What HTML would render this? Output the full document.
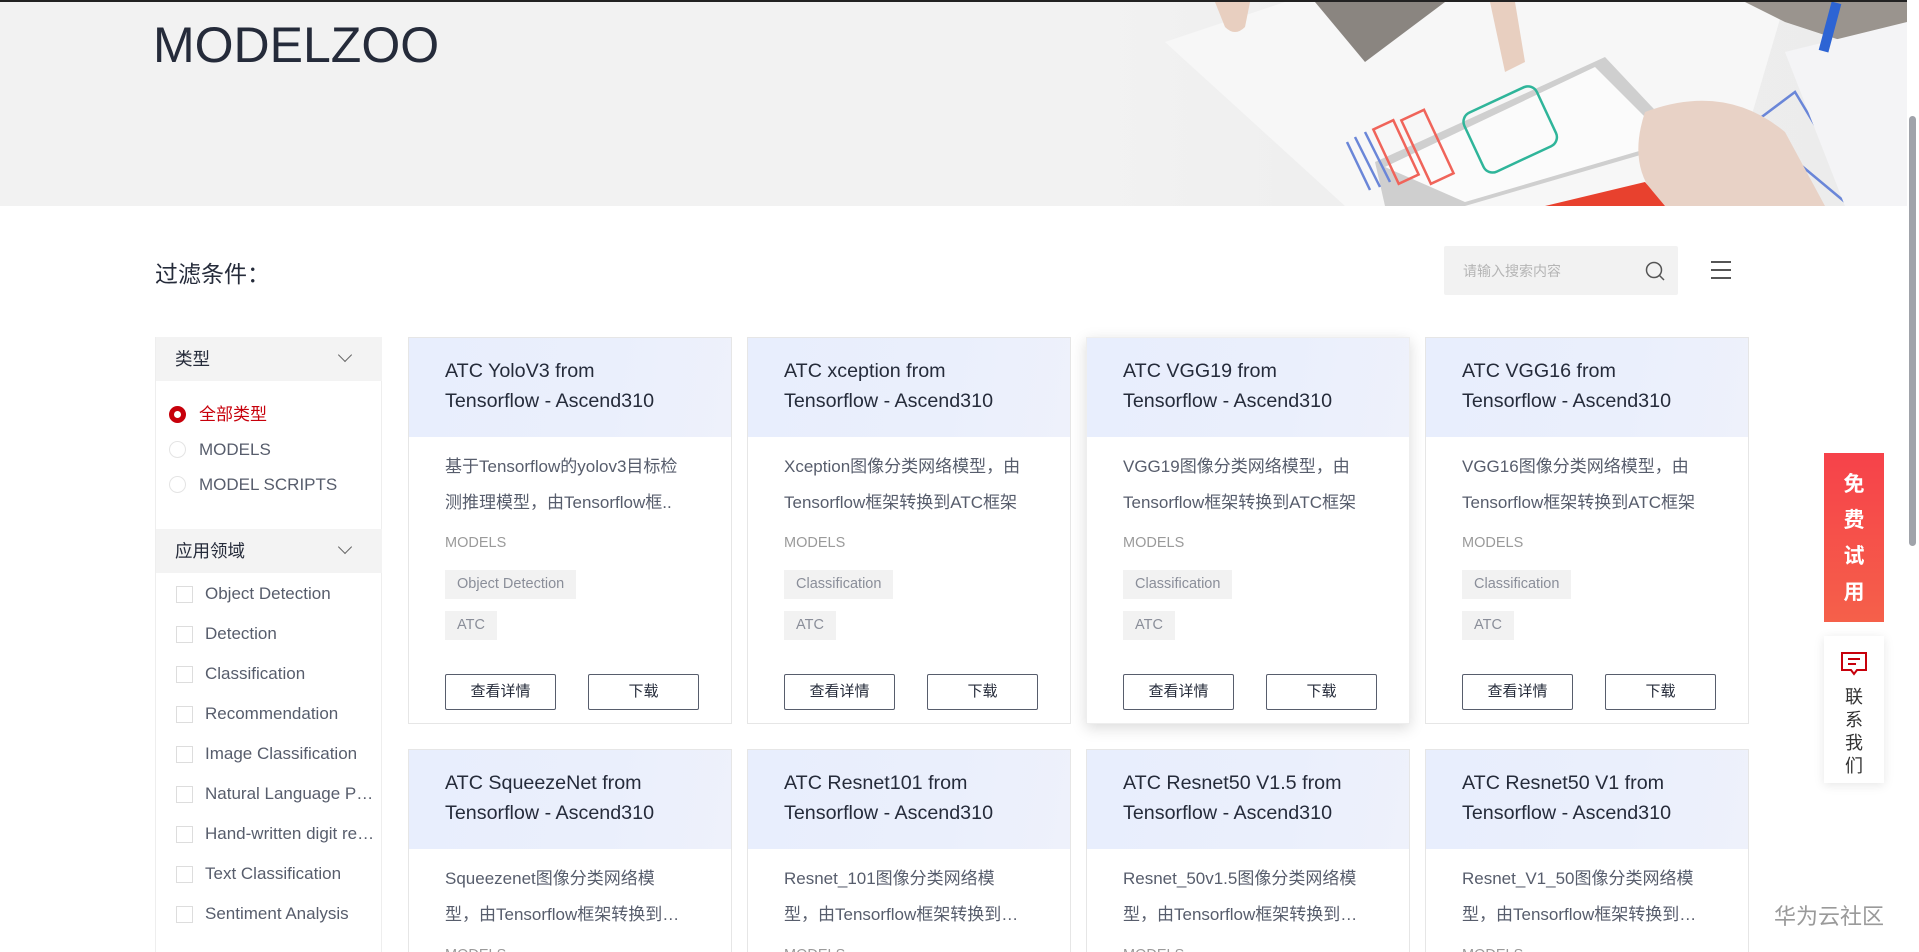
<!DOCTYPE html>
<html style="width:1919px;height:952px;overflow:hidden"><head><meta charset="utf-8"><style>
*{margin:0;padding:0;box-sizing:border-box}
body{width:1919px;height:952px;overflow:hidden;background:#fff;font-family:"Liberation Sans","Noto Sans CJK SC",sans-serif;position:relative;color:#252b3a}
.a{position:absolute}
.hdr{left:0;top:0;width:1919px;height:206px;background:#f2f2f2;border-top:2px solid #222}
.card{position:absolute;width:324px;height:387px;border:1px solid #e6e6e6;background:#fff;overflow:hidden}
.card .top{height:99px;background:linear-gradient(100deg,#e8eefd 0%,#eaeffc 60%,#eef1fb 100%);padding:18px 0 0 36px;font-size:19.7px;line-height:30px;color:#252b3a}
.card .d{padding:12px 42px 0 36px;font-size:17px;line-height:36px;color:#575d6c;height:86px;overflow:hidden}
.card .d div{white-space:nowrap;overflow:hidden;text-overflow:ellipsis}
.card .m{padding-left:36px;font-size:14.5px;color:#9a9a9a;margin-top:12px;height:22px}
.tag{display:inline-block;background:#f2f2f2;color:#8a8e99;font-size:14.5px;height:29px;line-height:29px;padding:0 12px;margin-left:36px}
.btn{position:absolute;top:336px;width:111px;height:36px;border:1px solid #575d6c;border-radius:2px;font-size:15px;line-height:34px;text-align:center;color:#252b3a}
.side{left:155px;top:337px;width:227px;height:615px;border-right:1px solid #eee;border-left:1px solid #eee}
.sh{position:absolute;left:0;width:226px;height:44px;background:#f3f3f3;font-size:17.5px;line-height:44px;padding-left:19px;color:#252b3a}
.sh:after{content:"";position:absolute;right:32px;top:13px;width:9px;height:9px;border-right:1.3px solid #666;border-bottom:1.3px solid #666;transform:rotate(45deg)}
.ri{position:absolute;left:13px;font-size:17px;color:#575d6c;line-height:20px}
.ri i{position:absolute;left:0;top:1px;width:17px;height:17px;border-radius:50%;border:1px solid #e4e4e4}
.ri span{margin-left:30px}
.ck{position:absolute;left:20px;font-size:17px;color:#575d6c;line-height:20px;white-space:nowrap}
.ck i{position:absolute;left:0;top:2px;width:17px;height:17px;border:1px solid #ddd}
.ck span{margin-left:29px}
</style></head><body>
<div class="a hdr"></div>
<svg class="a" style="left:1085px;top:2px" width="822" height="204" viewBox="0 0 822 204">
<defs><linearGradient id="g" x1="0" x2="1"><stop offset="0" stop-color="#f2f2f2"/><stop offset=".25" stop-color="#efefef"/><stop offset="1" stop-color="#ececec"/></linearGradient></defs>
<rect width="822" height="204" fill="url(#g)"/>
<polygon points="80,40 200,0 700,0 640,204 260,204" fill="#f7f7f7"/>
<polygon points="230,0 280,60 360,0" fill="#8a8580"/>
<polygon points="660,0 822,0 822,60 700,20" fill="#9a948e"/>
<polygon points="290,160 520,55 600,140 380,204 300,204" fill="#cfcfcf"/>
<polygon points="300,165 510,65 585,140 380,200" fill="#fbfbfb"/>
<g fill="none" stroke-width="2.5">
<rect x="385" y="95" width="80" height="65" rx="10" stroke="#2fb59a" transform="rotate(-25 425 127)"/>
<rect x="330" y="110" width="25" height="70" stroke="#f0645a" transform="rotate(-25 342 145)"/>
<rect x="300" y="120" width="22" height="60" stroke="#f0645a" transform="rotate(-25 311 150)"/>
<path d="M280 130 L305 180 M270 135 L295 185 M262 140 L285 188" stroke="#6a86d8"/>
<path d="M670 120 L710 90 L740 140 L780 110 M700 150 L760 200" stroke="#6a86d8"/>
</g>
<polygon points="700,50 822,20 822,204 760,204" fill="#f4f4f6"/>
<rect x="740" y="0" width="10" height="50" fill="#2d64d4" transform="rotate(15 745 25)"/>
<path d="M560 110 Q640 80 700 130 L740 204 L580 204 Q540 170 560 110Z" fill="#e8d2c6"/>
<path d="M405 0 L430 0 L440 60 L420 70Z" fill="#e8cfc0"/>
<path d="M130 0 L165 0 L160 25 Q150 35 140 25Z" fill="#e8cfc0"/>
<polygon points="460,204 560,180 580,204" fill="#e8412e"/>
</svg>
<div class="a" style="left:153px;top:16px;font-size:50px;color:#252b3a">MODELZOO</div>
<div class="a" style="left:155px;top:255px;font-size:23px;color:#252b3a">过滤条件：</div>
<div class="a" style="left:1444px;top:246px;width:234px;height:49px;background:#f2f2f2;border-radius:2px"></div>
<div class="a" style="left:1463px;top:261px;font-size:14px;color:#b5b5b5">请输入搜索内容</div>
<svg class="a" style="left:1644px;top:260px" width="22" height="22"><circle cx="10" cy="10" r="7.5" fill="none" stroke="#555" stroke-width="1.5"/><path d="M15.5 15.5 L20 20" stroke="#555" stroke-width="1.5"/></svg>
<svg class="a" style="left:1710px;top:260px" width="22" height="20"><path d="M1 2h20M1 10h20M1 18h20" stroke="#555" stroke-width="2"/></svg>

<div class="a side">
<div class="sh" style="top:0">类型</div>
<div class="ri" style="top:68px;color:#c7000b"><i style="border:5px solid #c7000b;background:#fff"></i><span>全部类型</span></div>
<div class="ri" style="top:103px"><i></i><span>MODELS</span></div>
<div class="ri" style="top:138px"><i></i><span>MODEL SCRIPTS</span></div>
<div class="sh" style="top:192px">应用领域</div>
<div class="ck" style="top:247px"><i></i><span>Object Detection</span></div>
<div class="ck" style="top:287px"><i></i><span>Detection</span></div>
<div class="ck" style="top:327px"><i></i><span>Classification</span></div>
<div class="ck" style="top:367px"><i></i><span>Recommendation</span></div>
<div class="ck" style="top:407px"><i></i><span>Image Classification</span></div>
<div class="ck" style="top:447px"><i></i><span>Natural Language P…</span></div>
<div class="ck" style="top:487px"><i></i><span>Hand-written digit re…</span></div>
<div class="ck" style="top:527px"><i></i><span>Text Classification</span></div>
<div class="ck" style="top:567px"><i></i><span>Sentiment Analysis</span></div>
</div>

<div class="card" style="left:408px;top:337px"><div class="top">ATC YoloV3 from<br>Tensorflow - Ascend310</div><div class="d">基于Tensorflow的yolov3目标检测推理模型，由Tensorflow框..</div><div class="m">MODELS</div><div style="margin-top:13px"><span class="tag">Object Detection</span></div><div style="margin-top:12px"><span class="tag">ATC</span></div><div class="btn" style="left:36px">查看详情</div><div class="btn" style="left:179px">下载</div></div>
<div class="card" style="left:747px;top:337px"><div class="top">ATC xception from<br>Tensorflow - Ascend310</div><div class="d">Xception图像分类网络模型，由Tensorflow框架转换到ATC框架</div><div class="m">MODELS</div><div style="margin-top:13px"><span class="tag">Classification</span></div><div style="margin-top:12px"><span class="tag">ATC</span></div><div class="btn" style="left:36px">查看详情</div><div class="btn" style="left:179px">下载</div></div>
<div class="card" style="left:1086px;top:337px;box-shadow:0 4px 14px rgba(0,0,0,.15);border-color:#eee;overflow:visible"><div class="top">ATC VGG19 from<br>Tensorflow - Ascend310</div><div class="d">VGG19图像分类网络模型，由Tensorflow框架转换到ATC框架</div><div class="m">MODELS</div><div style="margin-top:13px"><span class="tag">Classification</span></div><div style="margin-top:12px"><span class="tag">ATC</span></div><div class="btn" style="left:36px">查看详情</div><div class="btn" style="left:179px">下载</div></div>
<div class="card" style="left:1425px;top:337px"><div class="top">ATC VGG16 from<br>Tensorflow - Ascend310</div><div class="d">VGG16图像分类网络模型，由Tensorflow框架转换到ATC框架</div><div class="m">MODELS</div><div style="margin-top:13px"><span class="tag">Classification</span></div><div style="margin-top:12px"><span class="tag">ATC</span></div><div class="btn" style="left:36px">查看详情</div><div class="btn" style="left:179px">下载</div></div>

<div class="card" style="left:408px;top:749px;height:203px;border-bottom:none"><div class="top">ATC SqueezeNet from<br>Tensorflow - Ascend310</div><div class="d"><div>Squeezenet图像分类网络模</div><div>型，由Tensorflow框架转换到ATC框架</div></div><div class="m">MODELS</div></div>
<div class="card" style="left:747px;top:749px;height:203px;border-bottom:none"><div class="top">ATC Resnet101 from<br>Tensorflow - Ascend310</div><div class="d"><div>Resnet_101图像分类网络模</div><div>型，由Tensorflow框架转换到ATC框架</div></div><div class="m">MODELS</div></div>
<div class="card" style="left:1086px;top:749px;height:203px;border-bottom:none"><div class="top">ATC Resnet50 V1.5 from<br>Tensorflow - Ascend310</div><div class="d"><div>Resnet_50v1.5图像分类网络模</div><div>型，由Tensorflow框架转换到ATC框架</div></div><div class="m">MODELS</div></div>
<div class="card" style="left:1425px;top:749px;height:203px;border-bottom:none"><div class="top">ATC Resnet50 V1 from<br>Tensorflow - Ascend310</div><div class="d"><div>Resnet_V1_50图像分类网络模</div><div>型，由Tensorflow框架转换到ATC框架</div></div><div class="m">MODELS</div></div>

<div class="a" style="left:1824px;top:453px;width:60px;height:169px;background:linear-gradient(180deg,#f6424a,#f5604a);color:#fff;font-size:21px;font-weight:bold;text-align:center;line-height:36px;padding-top:14px">免<br>费<br>试<br>用</div>
<div class="a" style="left:1824px;top:636px;width:60px;height:147px;background:#fff;box-shadow:0 2px 10px rgba(0,0,0,.1);text-align:center">
<svg style="margin-top:15px" width="28" height="26"><path d="M2 2h24v17h-9l-3 4-3-4H2Z" fill="none" stroke="#c7000b" stroke-width="2"/><path d="M8 8h12M8 13h8" stroke="#c7000b" stroke-width="2"/></svg>
<div style="font-size:18px;line-height:23px;color:#333;margin-top:4px">联<br>系<br>我<br>们</div></div>
<div class="a" style="left:1907px;top:0;width:12px;height:952px;background:#fff"></div>
<div class="a" style="left:1909px;top:116px;width:7px;height:430px;background:#a0a3aa;border-radius:4px"></div>
<div class="a" style="left:1774px;top:899px;font-size:22px;color:#9a9a9a">华为云社区</div>
</body></html>
